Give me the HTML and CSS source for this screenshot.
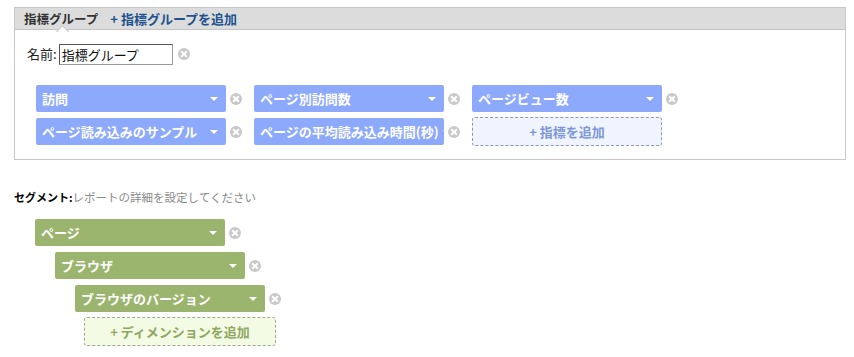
FILE: index.html
```html
<!DOCTYPE html>
<html lang="ja">
<head>
<meta charset="utf-8">
<link rel="stylesheet" href="styles.css">
</head>
<body>
<div class="group">
  <div class="group-head">
    <span class="tab">指標グループ<span class="notch"></span></span>
    <a class="add-group" href="#">+ 指標グループを追加</a>
  </div>
  <div class="group-body">
    <div class="name-row">
      <label class="name-label">名前:</label>
      <input class="name-input" type="text" value="指標グループ">
      <span class="x"></span>
    </div>
    <div class="metrics">
      <div class="cell"><div class="chip blue"><span class="lbl">訪問</span><span class="arrow"></span></div><span class="x"></span></div>
      <div class="cell"><div class="chip blue"><span class="lbl">ページ別訪問数</span><span class="arrow"></span></div><span class="x"></span></div>
      <div class="cell"><div class="chip blue"><span class="lbl">ページビュー数</span><span class="arrow"></span></div><span class="x"></span></div>
      <div class="cell"><div class="chip blue"><span class="lbl">ページ読み込みのサンプル</span><span class="arrow"></span></div><span class="x"></span></div>
      <div class="cell"><div class="chip blue"><span class="lbl">ページの平均読み込み時間(秒)</span><span class="arrow"></span></div><span class="x"></span></div>
      <div class="cell"><div class="add blue-add">+ 指標を追加</div></div>
    </div>
  </div>
</div>

<div class="segment">
  <div class="seg-title"><b>セグメント:</b><span class="hint">レポートの詳細を設定してください</span></div>
  <div class="seg-list">
    <div class="seg-row lvl0"><div class="chip green"><span class="lbl">ページ</span><span class="arrow"></span></div><span class="x"></span></div>
    <div class="seg-row lvl1"><div class="chip green"><span class="lbl">ブラウザ</span><span class="arrow"></span></div><span class="x"></span></div>
    <div class="seg-row lvl2"><div class="chip green"><span class="lbl">ブラウザのバージョン</span><span class="arrow"></span></div><span class="x"></span></div>
    <div class="seg-row lvl3"><div class="add green-add">+ ディメンションを追加</div></div>
  </div>
</div>
</body>
</html>
```
FILE: styles.css
```css
* { box-sizing: border-box; }
body {
  margin: 0;
  background: #fff;
  font-family: "Noto Sans CJK JP", "Liberation Sans", sans-serif;
  font-size: 12px;
  color: #222;
}
.group {
  margin: 7px 0 0 14px;
  width: 832px;
  height: 153px;
  border: 1px solid #c8c8c8;
}
.group-head {
  height: 22px;
  background: #dcdcdc;
  border-bottom: 1px solid #c4c4c4;
  display: flex;
  align-items: center;
  padding-left: 9px;
  font-size: 12.5px;
  font-weight: bold;
  line-height: 16px;
}
.tab { position: relative; color: #333; }
.notch {
  position: absolute;
  left: 34px;
  top: 16px;
  width: 9px;
  height: 9px;
  background: #fff;
  border-left: 1px solid #c4c4c4;
  border-top: 1px solid #c4c4c4;
  transform: rotate(45deg);
}
.add-group {
  margin-left: 12px;
  color: #20528e;
  text-decoration: none;
  font-size: 13px;
}
.group-body { padding: 13px 0 0 12px; }
.name-row {
  display: flex;
  align-items: center;
  height: 22px;
}
.name-label { font-size: 13px; line-height: 16px; margin-right: 2px; }
.name-input {
  width: 114px;
  height: 21px;
  padding: 0 2px;
  font-family: "Noto Sans CJK JP", sans-serif;
  font-size: 13px;
  color: #111;
  border: 1px solid #999;
  border-top-color: #555;
  border-left-color: #555;
  outline: none;
}
.x {
  position: relative;
  flex: none;
  width: 12px;
  height: 12px;
  border-radius: 50%;
  background: #c9c9c9;
  margin-left: 4px;
}
.name-row .x { margin-left: 5px; }
.x::before, .x::after {
  content: "";
  position: absolute;
  left: 2px;
  top: 5px;
  width: 8px;
  height: 2px;
  background: #fff;
  transform: rotate(45deg);
}
.x::after { transform: rotate(-45deg); }
.metrics {
  margin: 20px 0 0 9px;
  display: grid;
  grid-template-columns: repeat(3, 218px);
  row-gap: 6px;
}
.cell { display: flex; align-items: center; }
.chip {
  flex: none;
  width: 190px;
  height: 27px;
  border-radius: 2px;
  display: flex;
  align-items: center;
  justify-content: space-between;
  padding: 0 8px 0 6px;
  overflow: hidden;
  color: #fff;
  font-weight: bold;
  font-size: 13px;
  line-height: 16px;
  white-space: nowrap;
}
.blue { background: #8da9fb; }
.green { background: #9cb56e; }
.lbl { flex: none; }
.arrow {
  flex: none;
  margin-left: 4px;
  width: 0;
  height: 0;
  border-left: 4px solid transparent;
  border-right: 4px solid transparent;
  border-top: 4px solid #fff;
}
.add {
  width: 190px;
  height: 29px;
  border-radius: 3px;
  display: flex;
  align-items: center;
  justify-content: center;
  font-weight: bold;
  font-size: 13px;
  line-height: 16px;
}
.blue-add {
  margin-top: -1px;
  margin-bottom: -1px;
  background: #eff4fe;
  border: 1px dashed #8d96c0;
  color: #7e97d6;
}
.green-add {
  width: 192px;
  background: #f4fbe4;
  border: 1px dashed #a1a891;
  color: #8ea763;
}
.segment { margin: 29px 0 0 14px; }
.seg-title { line-height: 16px; }
.seg-title b { color: #000; font-size: 11px; }
.hint { color: #8a8a8a; font-size: 11.5px; }
.seg-list {
  margin-top: 14px;
  display: flex;
  flex-direction: column;
  gap: 6px;
}
.seg-row { display: flex; align-items: center; }
.lvl0 { padding-left: 21px; }
.lvl1 { padding-left: 41px; }
.lvl2 { padding-left: 61px; }
.lvl3 { padding-left: 70px; margin-top: -1px; }
```
